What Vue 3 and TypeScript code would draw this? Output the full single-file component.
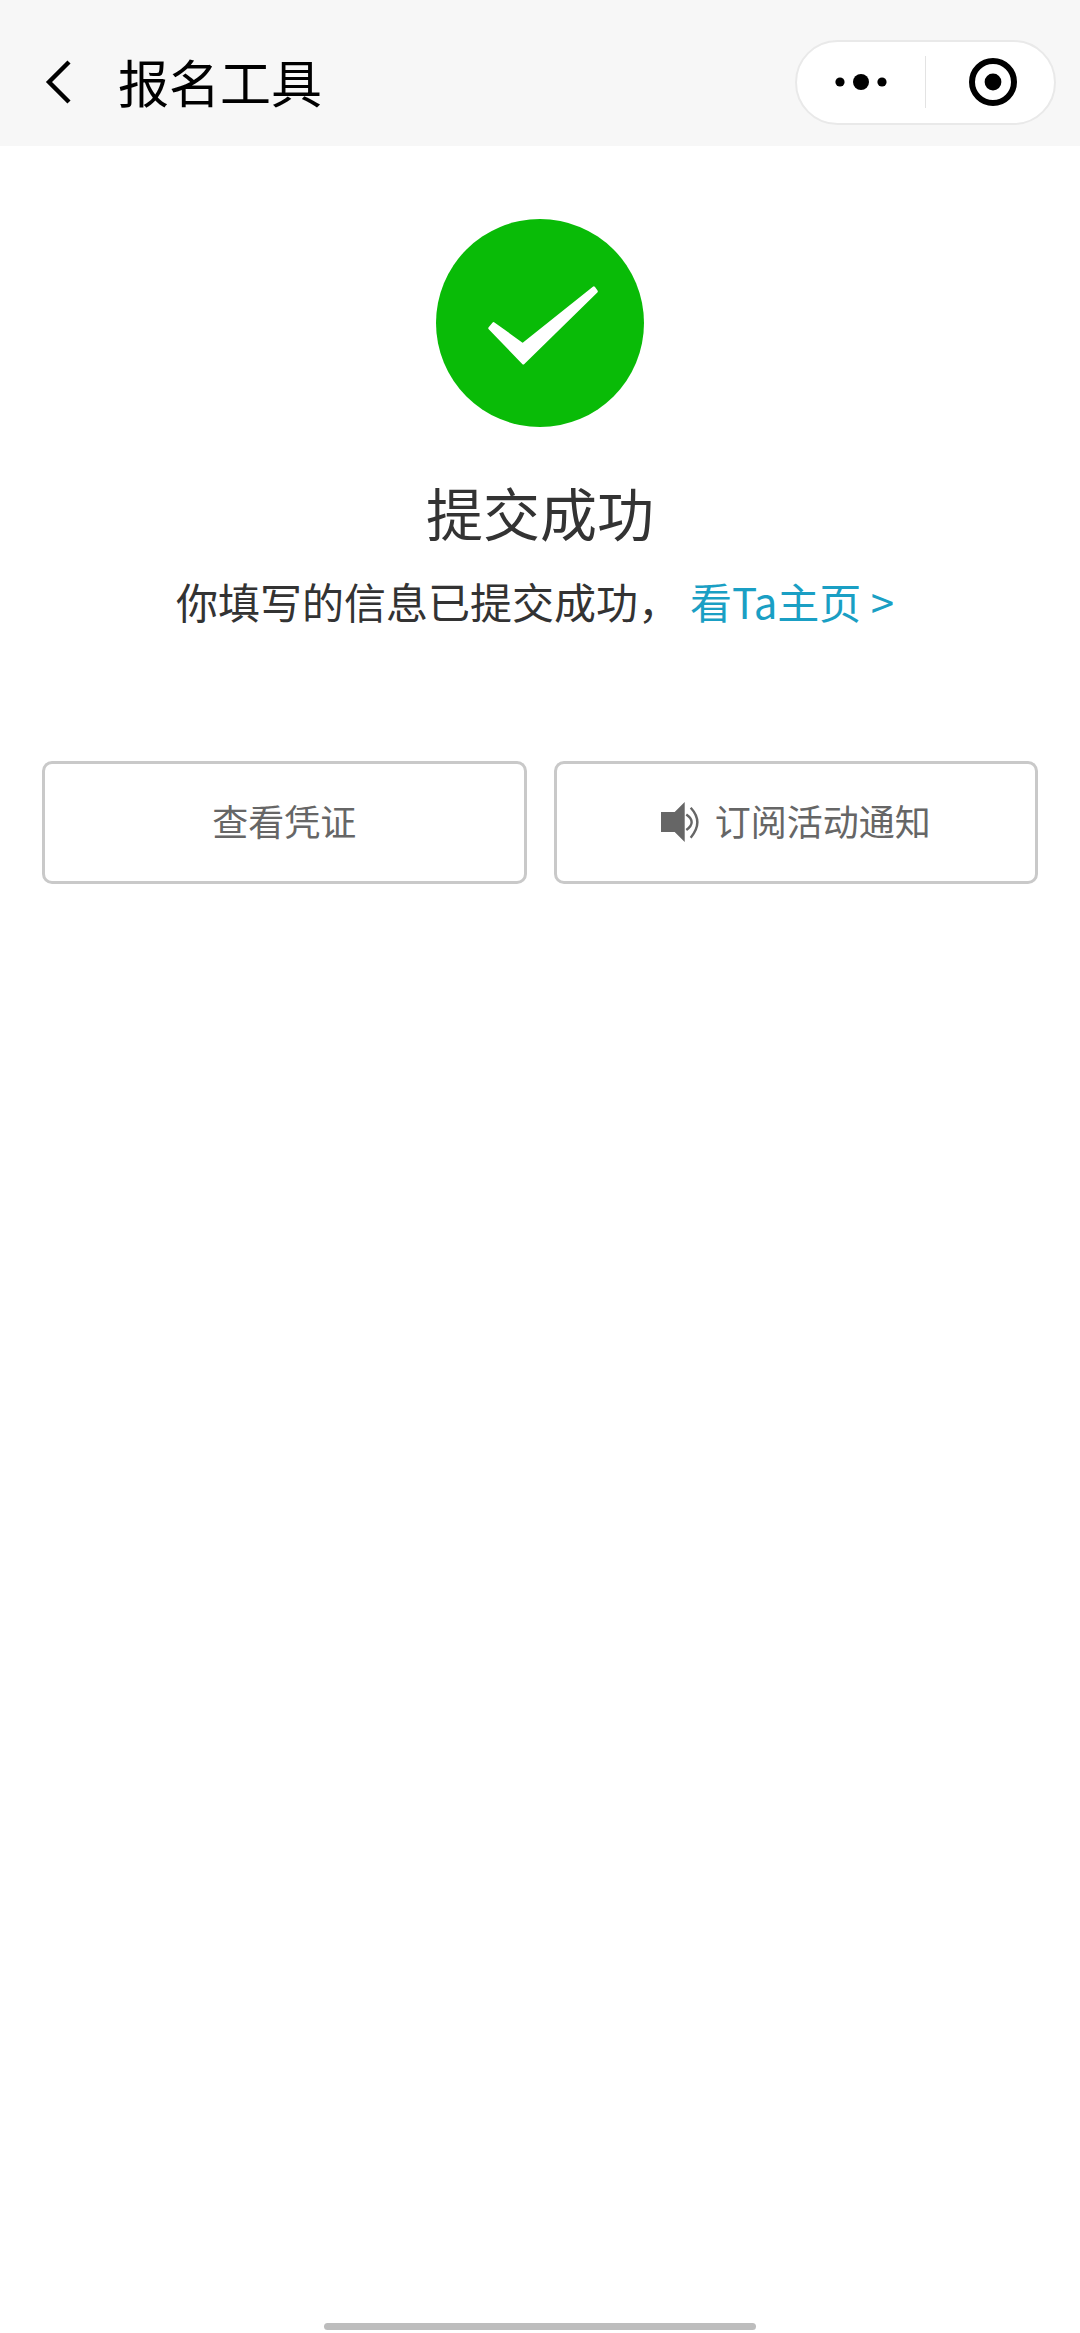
<script setup lang="ts">
const title: string = '报名工具'
</script>

<template>
  <div class="page">
    <header class="nav">
      <svg class="back" width="28" height="46" viewBox="0 0 28 46">
        <path d="M25 3 L5 23 L25 43" fill="none" stroke="#000" stroke-width="4.4" />
      </svg>
      <h1 class="nav-title">{{ title }}</h1>
      <div class="capsule">
        <div class="cap-half cap-half--more">
          <svg width="58" height="18" viewBox="0 0 58 18">
            <circle cx="8" cy="9" r="4.6" fill="#000" />
            <circle cx="29" cy="9" r="8" fill="#000" />
            <circle cx="50" cy="9" r="4.6" fill="#000" />
          </svg>
        </div>
        <div class="cap-divider"></div>
        <div class="cap-half cap-half--target">
          <svg width="48" height="48" viewBox="0 0 48 48">
            <circle cx="24" cy="24" r="21" fill="none" stroke="#000" stroke-width="6" />
            <circle cx="24" cy="24" r="8.4" fill="#000" />
          </svg>
        </div>
      </div>
    </header>

    <main class="content">
      <svg class="status" width="208" height="208" viewBox="0 0 208 208">
        <circle cx="104" cy="104" r="104" fill="#09bb07" />
        <path
          d="M53.8 109.2 L57.6 104.6 L86.7 125.6 L157.8 68.9 L160.3 72.4 L87.3 144 Z"
          fill="#fff"
          stroke="#fff"
          stroke-width="3"
          stroke-linejoin="round"
        />
      </svg>
      <h2 class="heading">提交成功</h2>
      <p class="desc">
        <span>你填写的信息已提交成功，</span><span class="link">看Ta主页 &gt;</span>
      </p>
      <div class="actions">
        <button class="btn" type="button">查看凭证</button>
        <button class="btn" type="button">
          <svg class="speaker" width="40" height="40" viewBox="0 0 40 40">
            <path d="M0 10 H13.7 L23.7 0 V40 L13.7 30 H0 Z" fill="#666" />
            <path d="M25.3 12.5 Q36 20 25.3 28" fill="none" stroke="#666" stroke-width="2.4" />
            <path d="M29.7 5.7 Q43 20 29.7 35.7" fill="none" stroke="#666" stroke-width="2.4" />
          </svg>
          <span>订阅活动通知</span>
        </button>
      </div>
    </main>

    <div class="home-bar"></div>
  </div>
</template>

<style>
html,
body {
  margin: 0;
  background: #fff;
}
</style>

<style scoped>
.page {
  width: 1080px;
  height: 2333px;
  display: flex;
  flex-direction: column;
  background: #fff;
  font-family: "Noto Sans CJK SC", "Noto Sans", sans-serif;
  overflow: hidden;
}

.nav {
  height: 146px;
  flex: none;
  display: flex;
  align-items: center;
  background: #f7f7f7;
  padding: 18px 24px 0 44px;
  box-sizing: border-box;
}

.back {
  flex: none;
}

.nav-title {
  margin: 0 0 2px 46px;
  font-size: 51px;
  font-weight: 400;
  line-height: 60px;
  color: #000;
}

.capsule {
  margin-left: auto;
  width: 261px;
  height: 85px;
  box-sizing: border-box;
  border: 2px solid #e9e9e9;
  border-radius: 43px;
  background: #fff;
  display: flex;
  align-items: center;
}

.cap-half {
  display: flex;
  align-items: center;
  justify-content: center;
}

.cap-half--more {
  width: 128px;
  flex: none;
}

.cap-half--target {
  flex: 1;
  padding-left: 6px;
}

.cap-divider {
  width: 1px;
  height: 52px;
  background: #e3e3e3;
  flex: none;
}

.content {
  display: flex;
  flex-direction: column;
  align-items: center;
  padding-top: 73px;
}

.status {
  display: block;
}

.heading {
  margin: 44px 0 0;
  font-size: 57px;
  font-weight: 400;
  line-height: 80px;
  color: #333;
}

.desc {
  margin: 20px 0 0;
  padding-right: 10px;
  font-size: 42px;
  line-height: 60px;
  color: #333;
  white-space: nowrap;
}

.link {
  margin-left: 10px;
  color: #1a9fc4;
}

.actions {
  width: 996px;
  margin-top: 130px;
  display: flex;
  gap: 27px;
}

.btn {
  flex: 1;
  height: 123px;
  box-sizing: border-box;
  border: 3px solid #c9c9c9;
  border-radius: 10px;
  background: #fff;
  color: #666;
  font: inherit;
  font-size: 36px;
  display: flex;
  align-items: center;
  justify-content: center;
  padding: 0 0 5px;
}

.speaker {
  margin-top: 3px;
  margin-right: 14px;
  flex: none;
}

.home-bar {
  margin-top: auto;
  margin-bottom: 3px;
  align-self: center;
  width: 432px;
  height: 7px;
  border-radius: 4px;
  background: #bdbdbd;
}
</style>
